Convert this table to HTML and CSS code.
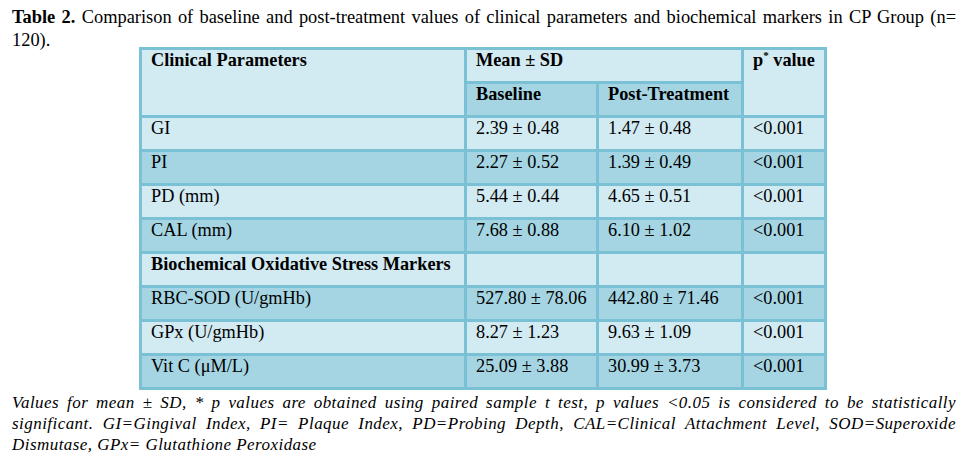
FILE: index.html
```html
<!DOCTYPE html>
<html>
<head>
<meta charset="utf-8">
<link rel="stylesheet" href="styles.css">
</head>
<body>
<p class="caption"><b>Table 2.</b> Comparison of baseline and post-treatment values of clinical parameters and biochemical markers in CP Group (n= 120).</p>
<table class="data">
  <colgroup>
    <col class="c1"><col class="c2"><col class="c3"><col class="c4">
  </colgroup>
  <tr class="light">
    <th rowspan="2">Clinical Parameters</th>
    <th colspan="2">Mean ± SD</th>
    <th rowspan="2">p<sup>*</sup> value</th>
  </tr>
  <tr class="dark">
    <th>Baseline</th>
    <th>Post-Treatment</th>
  </tr>
  <tr class="light"><td>GI</td><td>2.39 ± 0.48</td><td>1.47 ± 0.48</td><td>&lt;0.001</td></tr>
  <tr class="dark"><td>PI</td><td>2.27 ± 0.52</td><td>1.39 ± 0.49</td><td>&lt;0.001</td></tr>
  <tr class="light"><td>PD (mm)</td><td>5.44 ± 0.44</td><td>4.65 ± 0.51</td><td>&lt;0.001</td></tr>
  <tr class="dark"><td>CAL (mm)</td><td>7.68 ± 0.88</td><td>6.10 ± 1.02</td><td>&lt;0.001</td></tr>
  <tr class="light"><th>Biochemical Oxidative Stress Markers</th><td></td><td></td><td></td></tr>
  <tr class="dark"><td>RBC-SOD (U/gmHb)</td><td>527.80 ± 78.06</td><td>442.80 ± 71.46</td><td>&lt;0.001</td></tr>
  <tr class="light"><td>GPx (U/gmHb)</td><td>8.27 ± 1.23</td><td>9.63 ± 1.09</td><td>&lt;0.001</td></tr>
  <tr class="dark"><td>Vit C (μM/L)</td><td>25.09 ± 3.88</td><td>30.99 ± 3.73</td><td>&lt;0.001</td></tr>
</table>
<p class="note">Values for mean ± SD, * p values are obtained using paired sample t test, p values &lt;0.05 is considered to be statistically significant. GI=Gingival Index, PI= Plaque Index, PD=Probing Depth, CAL=Clinical Attachment Level, SOD=Superoxide Dismutase, GPx= Glutathione Peroxidase</p>
</body>
</html>
```

FILE: styles.css
```css
html, body {
  background: #ffffff;
}
body {
  margin: 0;
  padding: 6px 12px 0 12px;
  font-family: "Liberation Serif", "Times New Roman", serif;
  color: #000;
}
.caption {
  margin: 0 0 -4px 0;
  font-family: "Liberation Serif", "Times New Roman", serif;
  font-size: 18.4px;
  line-height: 22.5px;
  text-align: justify;
}
.data {
  margin: 0 0 0 127px;
  border-collapse: collapse;
  table-layout: fixed;
  width: 685px;
  border: 3px solid #7bc1d6;
  font-family: "Liberation Serif", "Times New Roman", serif;
  font-size: 18.3px;
}
.c1 { width: 325px; }
.c2 { width: 132px; }
.c3 { width: 145px; }
.c4 { width: 83px; }
.data th, .data td {
  border: 3px solid #7bc1d6;
  font-family: "Liberation Serif", "Times New Roman", serif;
  text-align: left;
  vertical-align: top;
  padding: 1px 6px 0 9px;
  height: 34px;
  box-sizing: border-box;
  line-height: 19px;
  white-space: nowrap;
}
.data th { font-weight: bold; }
.data sup {
  font-size: 11px;
  line-height: 0;
  vertical-align: 7px;
}
.light th, .light td { background: #d2eaf2; }
.dark th, .dark td { background: #a5d5e3; }
.note {
  margin: 2px 0 0 0;
  font-family: "Liberation Serif", "Times New Roman", serif;
  font-size: 17px;
  letter-spacing: 0.45px;
  line-height: 21px;
  font-style: italic;
  text-align: justify;
}
```
